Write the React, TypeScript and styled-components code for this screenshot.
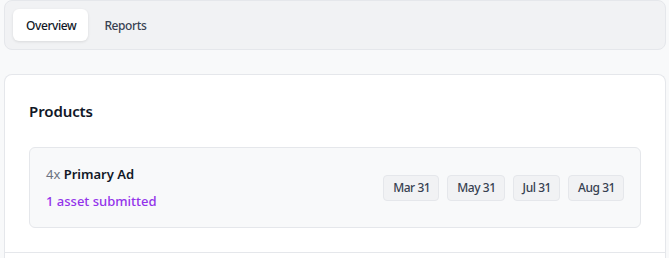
import React from 'react';
import styled, { createGlobalStyle } from 'styled-components';

const GlobalStyle = createGlobalStyle`
    body {
        margin: 0;
        background: #f8f9fa;
        font-family: 'Noto Sans', 'Open Sans', sans-serif;
        color: #111827;
    }
`;

const Page = styled.div`
    box-sizing: border-box;
    padding: 0 3px 0 4px;
`;

const TabBar = styled.div`
    display: flex;
    gap: 3px;
    padding: 8px;
    background: #f1f2f4;
    border: 1px solid #e5e7eb;
    border-radius: 8px;
`;

const Tab = styled.div<{ $active?: boolean }>`
    display: flex;
    align-items: center;
    height: 32px;
    padding: 0 12px 0 13px;
    border-radius: 6px;
    font-size: 12px;
    letter-spacing: -0.4px;
    font-weight: 500;
    color: ${p => (p.$active ? '#111827' : '#374151')};
    background: ${p => (p.$active ? '#ffffff' : 'transparent')};
    box-shadow: ${p => (p.$active ? '0 1px 3px rgba(0,0,0,0.1)' : 'none')};
`;

const Card = styled.div`
    margin-top: 24px;
    background: #ffffff;
    border: 1px solid #e5e7eb;
    border-bottom: none;
    border-radius: 8px 8px 0 0;
`;

const CardBody = styled.div`
    padding: 24px;
`;

const Title = styled.h2`
    margin: 0 0 24px;
    font-size: 15px;
    letter-spacing: -0.1px;
    line-height: 24px;
    font-weight: 600;
`;

const Item = styled.div`
    display: flex;
    align-items: center;
    justify-content: space-between;
    padding: 16px;
    background: #f8f9fa;
    border: 1px solid #e5e7eb;
    border-radius: 6px;
`;

const Info = styled.div`
    display: flex;
    flex-direction: column;
    gap: 7px;
`;

const Name = styled.div`
    font-size: 13px;
    line-height: 20px;
    font-weight: 600;
`;

const Count = styled.span`
    color: #6b7280;
    font-weight: 400;
`;

const Status = styled.div`
    font-size: 13px;
    line-height: 20px;
    font-weight: 500;
    color: #9333ea;
`;

const Dates = styled.div`
    display: flex;
    gap: 8px;
`;

const DateChip = styled.div`
    display: flex;
    align-items: center;
    height: 24px;
    padding: 0 8px 0 9px;
    background: #f1f2f4;
    border: 1px solid #e5e7eb;
    border-radius: 4px;
    font-size: 12px;
    letter-spacing: -0.45px;
    font-weight: 500;
    color: #374151;
`;

const Footer = styled.div`
    border-top: 1px solid #e5e7eb;
    height: 20px;
`;

const dates = ['Mar 31', 'May 31', 'Jul 31', 'Aug 31'];

export default function App() {
    return (
        <Page>
            <GlobalStyle />
            <TabBar>
                <Tab $active>Overview</Tab>
                <Tab>Reports</Tab>
            </TabBar>
            <Card>
                <CardBody>
                    <Title>Products</Title>
                    <Item>
                        <Info>
                            <Name><Count>4x</Count> Primary Ad</Name>
                            <Status>1 asset submitted</Status>
                        </Info>
                        <Dates>
                            {dates.map(d => <DateChip key={d}>{d}</DateChip>)}
                        </Dates>
                    </Item>
                </CardBody>
                <Footer />
            </Card>
        </Page>
    );
}
